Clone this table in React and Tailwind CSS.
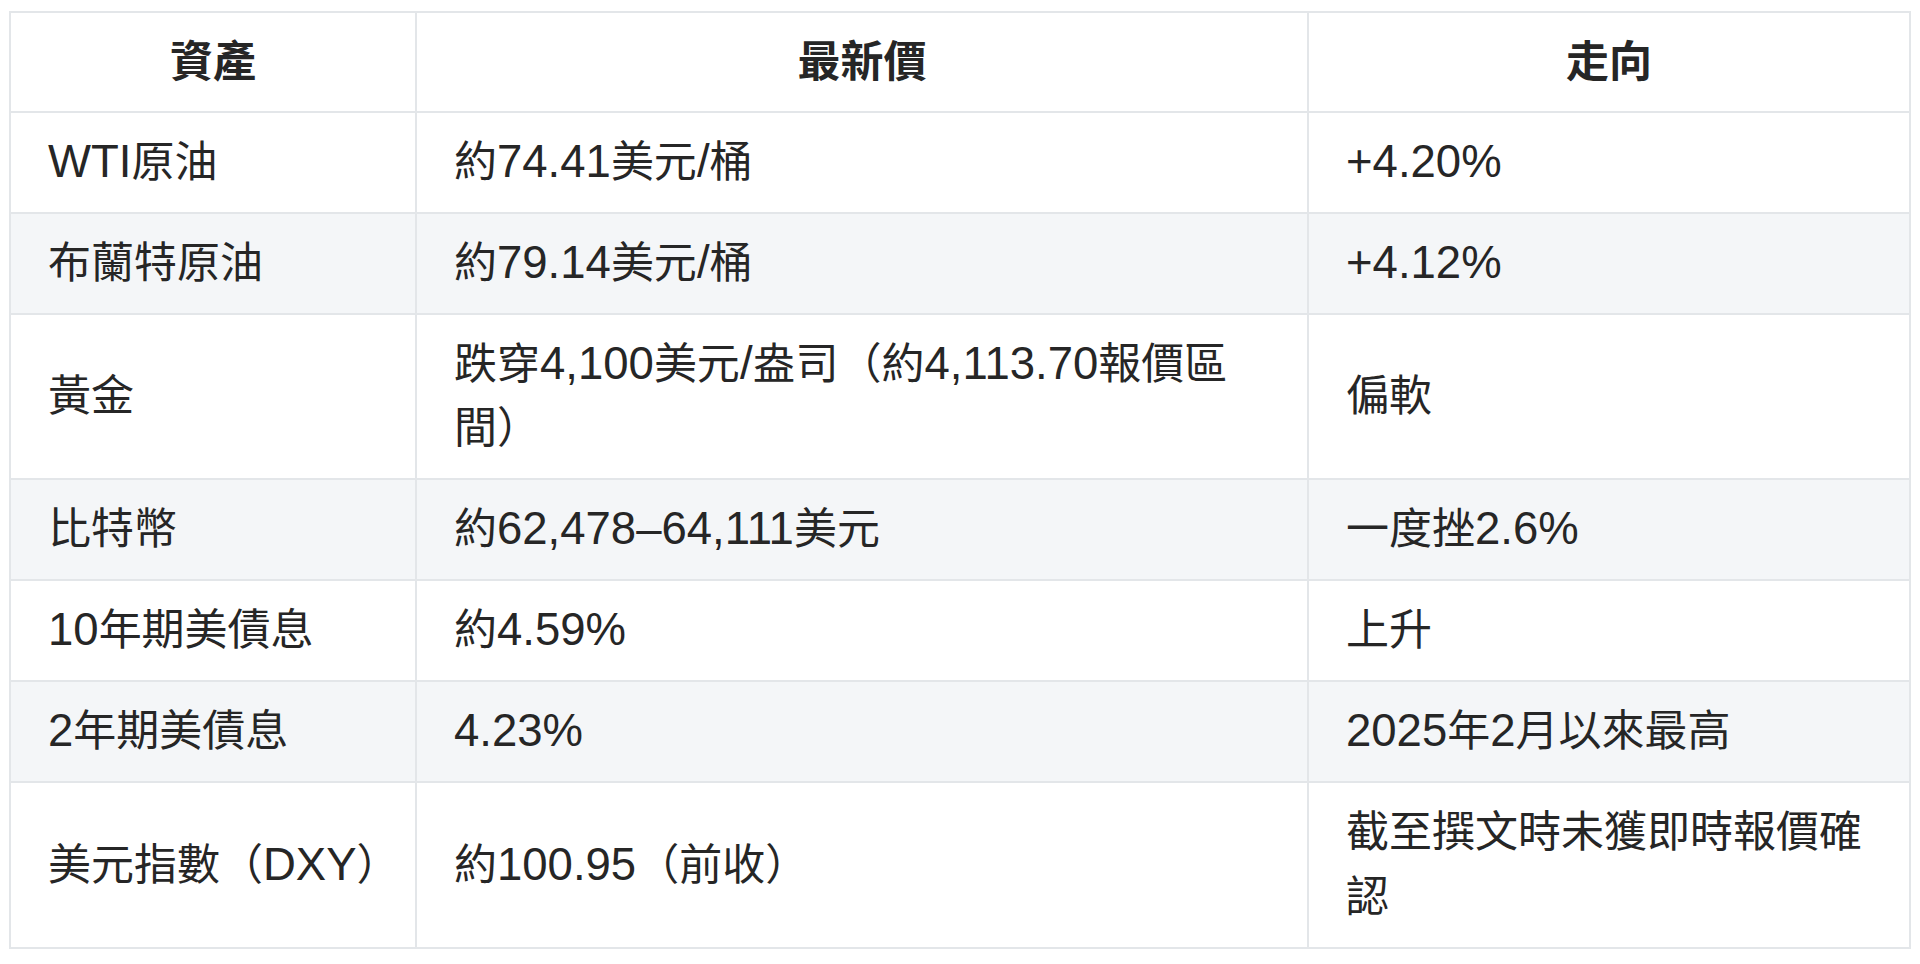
import React from "react";

const rows = [
  ["WTI原油", "約74.41美元/桶", "+4.20%"],
  ["布蘭特原油", "約79.14美元/桶", "+4.12%"],
  ["黃金", "跌穿4,100美元/盎司（約4,113.70報價區間）", "偏軟"],
  ["比特幣", "約62,478–64,111美元", "一度挫2.6%"],
  ["10年期美債息", "約4.59%", "上升"],
  ["2年期美債息", "4.23%", "2025年2月以來最高"],
  ["美元指數（DXY）", "約100.95（前收）", "截至撰文時未獲即時報價確認"],
];

function Mixed({ text }) {
  const parts = text.split(/([\x20-\x7E–]+)/).filter((p) => p !== "");
  return (
    <>
      {parts.map((p, i) =>
        /^[\x20-\x7E–]+$/.test(p) ? (
          <span key={i} className="text-[45.5px] leading-[64.5px]">
            {p}
          </span>
        ) : (
          <span key={i} className="leading-[64.5px]">{p}</span>
        )
      )}
    </>
  );
}

export default function App() {
  return (
    <div
      className="w-[1920px] h-[964px] bg-white pt-[11px] pl-[9px] overflow-hidden"
      style={{ fontFamily: '"Liberation Sans", "Noto Sans CJK TC", sans-serif' }}
    >
      <table className="table-fixed border-collapse w-[1900px] text-[43px] leading-[64.5px] text-[#262626]">
        <colgroup>
          <col className="w-[406px]" />
          <col className="w-[892px]" />
          <col className="w-[602px]" />
        </colgroup>
        <thead>
          <tr className="bg-white">
            {["資產", "最新價", "走向"].map((h) => (
              <th
                key={h}
                className="border-2 border-[#e3e6e9] px-[37px] py-[16.5px] text-center font-bold"
              >
                {h}
              </th>
            ))}
          </tr>
        </thead>
        <tbody>
          {rows.map((r, i) => (
            <tr key={i} className={i % 2 === 1 ? "bg-[#f4f6f8]" : "bg-white"}>
              {r.map((c, j) => (
                <td
                  key={j}
                  className={
                    j === 0
                      ? "border-2 border-[#e3e6e9] pl-[37px] pr-[20px] py-[17.25px] text-left align-middle whitespace-nowrap"
                      : "border-2 border-[#e3e6e9] px-[37px] py-[17.25px] text-left align-middle"
                  }
                >
                  <Mixed text={c} />
                </td>
              ))}
            </tr>
          ))}
        </tbody>
      </table>
    </div>
  );
}
